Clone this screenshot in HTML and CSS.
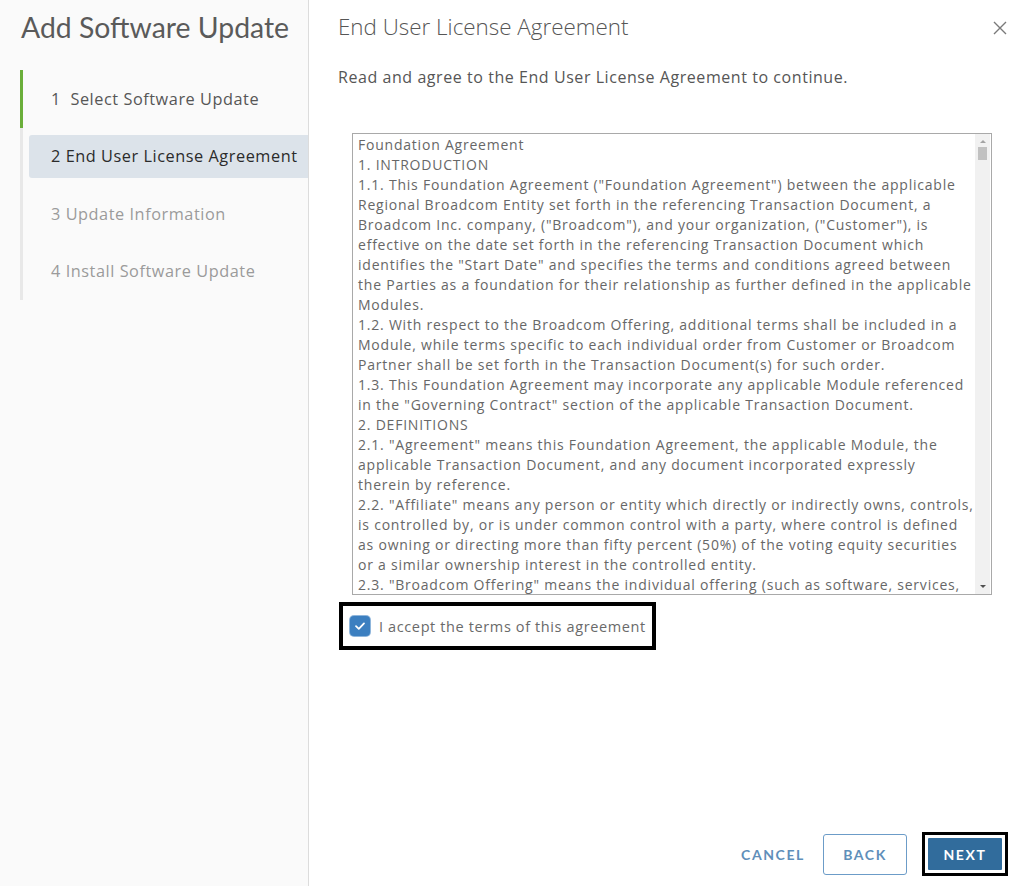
FILE: index.html
```html
<!DOCTYPE html>
<html lang="en">
<head>
<meta charset="utf-8">
<title>Add Software Update</title>
<link rel="stylesheet" href="styles.css">
</head>
<body>
<div class="dialog">
  <aside class="sidebar">
    <h1 class="wizard-title">Add Software Update</h1>
    <ol class="steps">
      <li class="step step-done"><span class="step-label">1&nbsp; Select Software Update</span></li>
      <li class="step step-active"><span class="step-label">2 End User License Agreement</span></li>
      <li class="step step-todo"><span class="step-label">3 Update Information</span></li>
      <li class="step step-todo"><span class="step-label">4 Install Software Update</span></li>
    </ol>
  </aside>
  <main class="main">
    <header class="main-header">
      <h2 class="page-title">End User License Agreement</h2>
      <button class="close" aria-label="Close">
        <svg width="16" height="16" viewBox="0 0 16 16"><path d="M2 2 L14 14 M14 2 L2 14" stroke="#7a7a7a" stroke-width="1.4" fill="none"/></svg>
      </button>
    </header>
    <p class="intro">Read and agree to the End User License Agreement to continue.</p>
    <div class="eula">
      <div class="eula-text">Foundation Agreement<br>
1. INTRODUCTION<br>
1.1. This Foundation Agreement ("Foundation Agreement") between the applicable<br>
Regional Broadcom Entity set forth in the referencing Transaction Document, a<br>
Broadcom Inc. company, ("Broadcom"), and your organization, ("Customer"), is<br>
effective on the date set forth in the referencing Transaction Document which<br>
identifies the "Start Date" and specifies the terms and conditions agreed between<br>
the Parties as a foundation for their relationship as further defined in the applicable<br>
Modules.<br>
1.2. With respect to the Broadcom Offering, additional terms shall be included in a<br>
Module, while terms specific to each individual order from Customer or Broadcom<br>
Partner shall be set forth in the Transaction Document(s) for such order.<br>
1.3. This Foundation Agreement may incorporate any applicable Module referenced<br>
in the "Governing Contract" section of the applicable Transaction Document.<br>
2. DEFINITIONS<br>
2.1. "Agreement" means this Foundation Agreement, the applicable Module, the<br>
applicable Transaction Document, and any document incorporated expressly<br>
therein by reference.<br>
2.2. "Affiliate" means any person or entity which directly or indirectly owns, controls,<br>
is controlled by, or is under common control with a party, where control is defined<br>
as owning or directing more than fifty percent (50%) of the voting equity securities<br>
or a similar ownership interest in the controlled entity.<br>
2.3. "Broadcom Offering" means the individual offering (such as software, services,</div>
      <div class="scrollbar">
        <span class="arrow arrow-up"></span>
        <span class="thumb"></span>
        <span class="track"></span>
        <span class="arrow arrow-down"></span>
      </div>
    </div>
    <div class="accept-wrap">
      <label class="accept">
        <span class="checkbox">
          <svg width="12" height="10" viewBox="0 0 12 10"><path d="M2 5.2 L4.8 7.8 L10 2.4" stroke="#fff" stroke-width="1.8" fill="none" stroke-linecap="round" stroke-linejoin="round"/></svg>
        </span>
        <span class="accept-text">I accept the terms of this agreement</span>
      </label>
    </div>
    <footer class="actions">
      <button class="btn btn-link">CANCEL</button>
      <button class="btn btn-outline">BACK</button>
      <span class="next-focus"><button class="btn btn-primary">NEXT</button></span>
    </footer>
  </main>
</div>
</body>
</html>
```
FILE: styles.css
```css
* { box-sizing: border-box; }
html, body { margin: 0; padding: 0; }
body {
  width: 1024px;
  height: 886px;
  overflow: hidden;
  background: #fff;
  font-family: "Open Sans", Lato, sans-serif;
  color: #565656;
}
.dialog {
  display: flex;
  height: 886px;
}
.sidebar {
  width: 309px;
  flex: 0 0 309px;
  background: #fafafa;
  border-right: 1px solid #dcdcdc;
  padding: 0 0 0 20px;
}
.wizard-title {
  margin: 0;
  padding: 9px 0 0 1px;
  height: 70px;
  font-family: Lato, sans-serif;
  font-size: 28.4px;
  line-height: 36px;
  font-weight: 400;
  color: #5a5a5a;
}
.steps {
  list-style: none;
  margin: 0;
  padding: 0;
}
.step {
  height: 57.5px;
  border-left: 3px solid #e8e8e8;
  padding: 7px 0 7px 6px;
  display: flex;
}
.step-done { border-left-color: #6aae3a; }
.step-label {
  flex: 1;
  display: flex;
  align-items: center;
  padding-left: 22px;
  font-size: 16.3px;
  letter-spacing: 0.55px;
  color: #565656;
  border-radius: 3px 0 0 3px;
}
.step-active .step-label {
  background: #dce3ea;
  color: #2b2b2b;
}
.step-todo .step-label { color: #9b9b9b; }

.main {
  flex: 1;
  display: flex;
  flex-direction: column;
  padding: 0 16px 0 29px;
}
.main-header {
  display: flex;
  justify-content: space-between;
  align-items: center;
  height: 52px;
}
.page-title {
  margin: 0;
  font-family: "Open Sans", sans-serif;
  font-weight: 300;
  font-size: 22.4px;
  color: #565656;
}
.close {
  border: 0;
  background: none;
  padding: 0;
  margin: 4px 0 0 0;
  width: 16px;
  height: 16px;
  display: flex;
}
.intro {
  margin: 14px 0 0 0;
  font-size: 16px;
  letter-spacing: 0.56px;
  line-height: 22px;
  color: #565656;
}
.eula {
  margin: 45px 0 0 14px;
  width: 640px;
  height: 462px;
  border: 1px solid #a9a9a9;
  display: flex;
  background: #fff;
}
.eula-text {
  flex: 1;
  padding: 1px 0 0 5px;
  font-size: 14px;
  letter-spacing: 0.78px;
  line-height: 20px;
  color: #676767;
  white-space: nowrap;
  overflow: hidden;
}
.scrollbar {
  width: 15px;
  flex: 0 0 15px;
  background: #f1f1f1;
  display: flex;
  flex-direction: column;
  align-items: center;
  margin-right: 1px;
}
.arrow {
  width: 0;
  height: 0;
  border-left: 3px solid transparent;
  border-right: 3px solid transparent;
  flex: 0 0 auto;
}
.arrow-up {
  border-bottom: 3px solid #a3a3a3;
  margin: 6px 0 4px;
}
.arrow-down {
  border-top: 3px solid #505050;
  margin: 4px 0 6px;
}
.thumb {
  width: 9px;
  height: 13px;
  background: #c1c1c1;
}
.track { flex: 1; }

.accept-wrap {
  margin: 7px 0 0 1px;
  width: 317px;
  height: 48px;
  border: 4px solid #000;
  display: flex;
  align-items: center;
  padding-left: 7px;
}
.accept {
  display: flex;
  align-items: center;
}
.checkbox {
  width: 20px;
  height: 20px;
  border-radius: 4px;
  background: #3c7fc0;
  box-shadow: 0 0 0 1px #8fb6dc;
  display: flex;
  align-items: center;
  justify-content: center;
}
.accept-text {
  margin-left: 9px;
  font-size: 14.5px;
  letter-spacing: 0.62px;
  color: #6a6a6a;
}
.actions {
  margin-top: auto;
  margin-bottom: 10px;
  display: flex;
  justify-content: flex-end;
  align-items: center;
}
.btn {
  font-family: Lato, sans-serif;
  font-size: 14px;
  font-weight: 700;
  letter-spacing: 1.6px;
  height: 41px;
  border-radius: 3px;
  cursor: pointer;
}
.btn-link {
  border: 0;
  background: none;
  color: #5f8fba;
  padding: 0;
  margin-right: 18px;
}
.btn-outline {
  width: 84px;
  border: 1px solid #6c9cc8;
  background: #fff;
  color: #5f8fba;
  margin-right: 15px;
}
.next-focus {
  display: flex;
  border: 3px solid #000;
  padding: 3px;
}
.btn-primary {
  width: 74px;
  height: 32px;
  border: 0;
  border-radius: 1px;
  background: #316c9c;
  color: #fff;
}
```
